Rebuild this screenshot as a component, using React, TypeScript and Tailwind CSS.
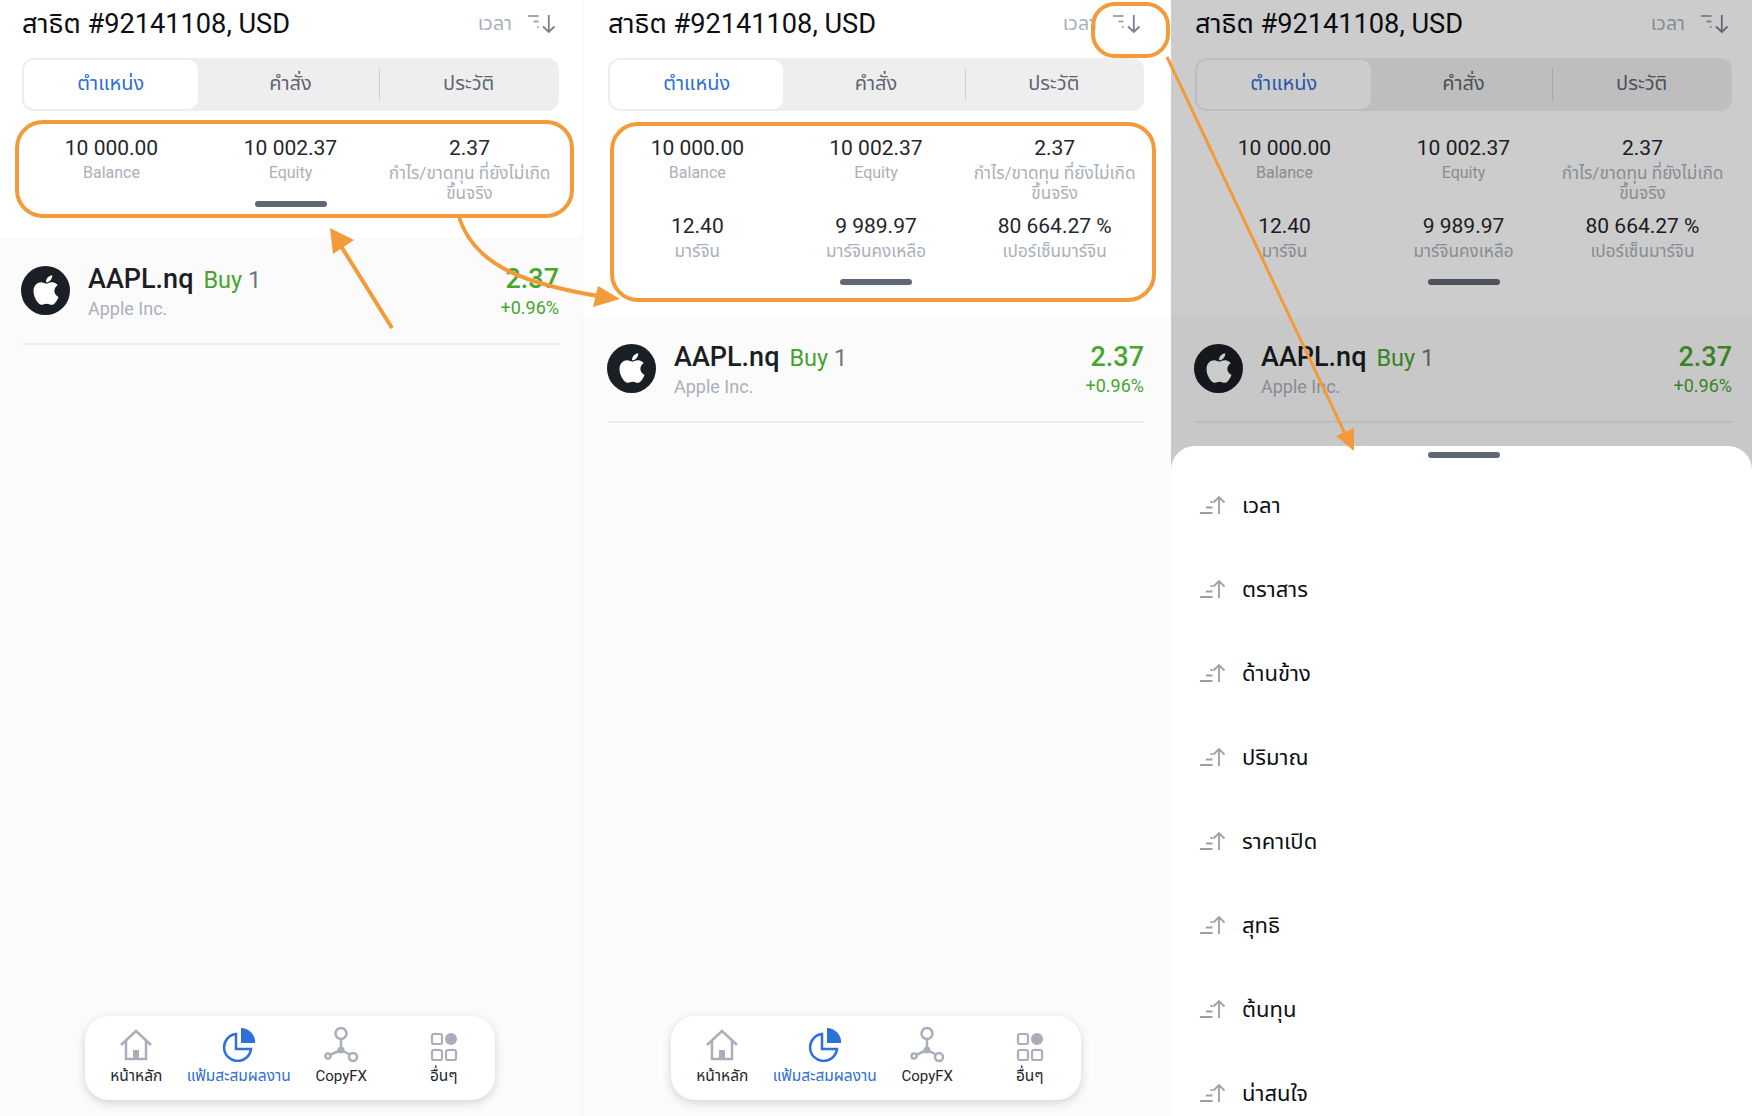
import { FaApple } from "react-icons/fa";

const FONT = "font-['Roboto','Noto_Sans_Thai','Noto_Sans','DejaVu_Sans',sans-serif]";

const rowOne = [
  { value: "10 000.00", label: "Balance" },
  { value: "10 002.37", label: "Equity" },
  { value: "2.37", label: "กำไร/ขาดทุน ที่ยังไม่เกิด\nขึ้นจริง", thai: true },
];
const rowTwo = [
  { value: "12.40", label: "มาร์จิน", thai: true },
  { value: "9 989.97", label: "มาร์จินคงเหลือ", thai: true },
  { value: "80 664.27 %", label: "เปอร์เซ็นมาร์จิน", thai: true },
];
const sortItems = ["เวลา", "ตราสาร", "ด้านข้าง", "ปริมาณ", "ราคาเปิด", "สุทธิ", "ต้นทุน", "น่าสนใจ"];

function SortDown() {
  return (
    <svg width="28" height="20" viewBox="0 0 28 20" fill="none" stroke="#a0a5ae" strokeWidth="1.8">
      <path d="M0 2h10.500M5.500 7.500h5M9 13h1.500" />
      <path d="M20.800 1v17M15 12.500l5.800 5.500 5.700-5.500" stroke="#7b818c" />
    </svg>
  );
}

function SortUp() {
  return (
    <svg width="28" height="20" viewBox="0 0 28 20" fill="none" stroke="#9a9fa9" strokeWidth="1.8">
      <path d="M1 18h12.500M7 12.500h6.500M11.500 7h2" />
      <path d="M20 19V2M14.500 7.500L20 2l5.500 5.500" />
    </svg>
  );
}

function Stat({ value, label, thai }: { value: string; label: string; thai?: boolean }) {
  return (
    <div className="flex flex-col items-center text-center">
      <div className="text-[21px] leading-[29px] text-[#23262d]">{value}</div>
      <div className={`${thai ? "text-[17.200px]" : "text-[16px]"} leading-[20px] whitespace-pre-line text-[#aab0b9]`}>
        {label}
      </div>
    </div>
  );
}

function BottomNav({ inset }: { inset: string }) {
  return (
    <div className={`absolute left-0 right-0 bottom-[16px] ${inset}`}>
      <div className="ml-[63px] w-[410px] h-[84px] rounded-[24px] bg-white shadow-[0_3px_10px_rgba(0,0,0,0.16)] grid grid-cols-4">
        <div className="flex flex-col items-center pt-[12px]">
          <svg width="34" height="34" viewBox="0 0 34 34" fill="none" stroke="#a9aeb8" strokeWidth="2.500">
            <path d="M2 17L17 3l15 14M7 13v18h20V13" />
            <rect x="14" y="22" width="6" height="9" fill="#a9aeb8" stroke="none" />
          </svg>
          <span className="text-[15.500px] leading-[18px] mt-[5px] text-[#23262d]">หน้าหลัก</span>
        </div>
        <div className="flex flex-col items-center pt-[12px]">
          <svg width="34" height="34" viewBox="0 0 34 34" fill="none" stroke="#2f6fd8" strokeWidth="2.500">
            <path d="M14 6a13.500 13.500 0 1 0 15 15H14z" />
            <path d="M19 0a14 14 0 0 1 14 15H19z" fill="#2f6fd8" stroke="none" />
          </svg>
          <span className="text-[15.500px] leading-[18px] mt-[5px] text-[#2f6fd8] whitespace-nowrap">แฟ้มสะสมผลงาน</span>
        </div>
        <div className="flex flex-col items-center pt-[12px]">
          <svg width="36" height="36" viewBox="0 0 36 36" fill="none" stroke="#a9aeb8" strokeWidth="2.500" className="-mt-[1px] -mb-[1px]">
            <circle cx="18" cy="6.500" r="5.500" />
            <path d="M18 12v11M18 23l-10 4.500M18 23l9 4.500" />
            <circle cx="18" cy="23" r="3.500" fill="#a9aeb8" stroke="none" />
            <circle cx="5" cy="29" r="2.500" />
            <circle cx="30" cy="30" r="4" />
          </svg>
          <span className="text-[15px] leading-[18px] mt-[5px] text-[#23262d]">CopyFX</span>
        </div>
        <div className="flex flex-col items-center pt-[12px]">
          <svg width="34" height="34" viewBox="0 0 34 34" fill="none" stroke="#a9aeb8" strokeWidth="2.200">
            <rect x="5" y="6" width="10" height="10" rx="2" />
            <circle cx="24" cy="11" r="6" fill="#a9aeb8" stroke="none" />
            <rect x="5" y="22" width="10" height="10" rx="2" />
            <rect x="19" y="22" width="10" height="10" rx="2" />
          </svg>
          <span className="text-[15.500px] leading-[18px] mt-[5px] text-[#23262d]">อื่นๆ</span>
        </div>
      </div>
    </div>
  );
}

function Phone({
  expanded,
  sheet,
  className,
  inset,
}: {
  expanded?: boolean;
  sheet?: boolean;
  className: string;
  inset: string;
}) {
  return (
    <div className={`relative h-full overflow-hidden bg-[#fbfbfb] ${className}`}>
      <div className={`bg-white ${inset}`}>
        <div className="flex items-center justify-between h-[48px]">
          <span className="text-[27.200px] text-[#0d0f13]">สาธิต #92141108, USD</span>
          <div className="flex items-center gap-[16px] pr-[3px]">
            <span className="text-[19.500px] text-[#aab0b9]">เวลา</span>
            <SortDown />
          </div>
        </div>
        <div className="mt-[10px] h-[53px] rounded-[12px] bg-[#eeeeee] p-[2px] grid grid-cols-3 items-center text-[20px] text-[#5f6672]">
          <div className="h-full mr-[4px] pb-[3px] rounded-[10px] bg-white flex items-center justify-center text-[#2f6fd8]">ตำแหน่ง</div>
          <div className="text-center h-[33px] leading-[31px]">คำสั่ง</div>
          <div className="text-center h-[33px] leading-[31px] border-l border-[#cfd1d5]">ประวัติ</div>
        </div>
        <div className="mt-[23px] grid grid-cols-3 gap-y-[9px]">
          {rowOne.map((s) => (
            <Stat key={s.value} {...s} />
          ))}
          {expanded && rowTwo.map((s) => <Stat key={s.value} {...s} />)}
        </div>
        <div className={`${expanded ? "mt-[18px]" : "-mt-[2px]"} mx-auto w-[72px] h-[6px] rounded-full bg-[#5f6774]`} />
        <div className="h-[31px]" />
      </div>

      <div className={inset}>
        <div className="h-[107px] flex items-center border-b-2 border-[#ececee]">
          <div className="-ml-[1px] w-[49px] h-[49px] rounded-full bg-[#1a1e25] flex items-center justify-center shrink-0">
            <FaApple className="text-white text-[34px] -mt-[2px]" />
          </div>
          <div className="ml-[18px] flex-1 pt-[2px]">
            <div className="flex items-baseline gap-[10px] leading-[32px]">
              <span className="text-[27px] font-medium text-[#1a1e25]">AAPL.nq</span>
              <span className="text-[23.500px] text-[#47a52e]">
                Buy <span className="text-[#6f7580]">1</span>
              </span>
            </div>
            <div className="text-[18px] leading-[25px] text-[#aab0b9]">Apple Inc.</div>
          </div>
          <div className="text-right pt-[2px]">
            <div className="text-[27px] font-medium leading-[32px] text-[#47a52e]">2.37</div>
            <div className="text-[18px] leading-[25px] text-[#47a52e]">+0.96%</div>
          </div>
        </div>
      </div>

      {!sheet && <BottomNav inset={inset} />}

      {sheet && (
        <>
          <div className="absolute inset-0 bg-black/20" />
          <div className="absolute left-0 right-0 top-[446px] bottom-0 rounded-t-[24px] bg-white">
            <div className={inset}>
              <div className="mx-auto mt-[6px] w-[72px] h-[6px] rounded-full bg-[#5f6774]" />
            </div>
            <div className="mt-[5px]">
              {sortItems.map((name) => (
                <div key={name} className="flex items-center gap-[15px] h-[84px] pl-[28px]">
                  <SortUp />
                  <span className="text-[22px] text-[#0d0f13]">{name}</span>
                </div>
              ))}
            </div>
          </div>
        </>
      )}
    </div>
  );
}

export default function App() {
  return (
    <div className={`relative w-[1752px] h-[1116px] flex overflow-hidden bg-white ${FONT}`}>
      <Phone className="w-[583px] border-r border-[#f4f4f4]" inset="pl-[22px] pr-[23px]" />
      <Phone expanded className="w-[588px]" inset="pl-[25px] pr-[27px]" />
      <Phone expanded sheet className="w-[581px]" inset="pl-[24px] pr-[20px]" />

      {/* annotations drawn on top of the three screens */}
      <svg width="1752" height="1116" viewBox="0 0 1752 1116" fill="none" stroke="#f39a3a" strokeWidth="4" className="absolute inset-0 pointer-events-none">
        <rect x="17" y="122" width="555" height="94" rx="26" />
        <rect x="612" y="124" width="542" height="176" rx="26" />
        <rect x="1093" y="4" width="75" height="52" rx="22" />
        <path d="M392 328L336 238" />
        <path d="M330 228l24 12-21 14z" fill="#f39a3a" stroke="none" />
        <path d="M459 217C475 268 530 285 604 297" />
        <path d="M620 299l-27 8 5-21z" fill="#f39a3a" stroke="none" />
        <path d="M1167 57L1347 438" strokeWidth="3" />
        <path d="M1354 451l-18-15 18-8z" fill="#f39a3a" stroke="none" />
      </svg>
    </div>
  );
}
